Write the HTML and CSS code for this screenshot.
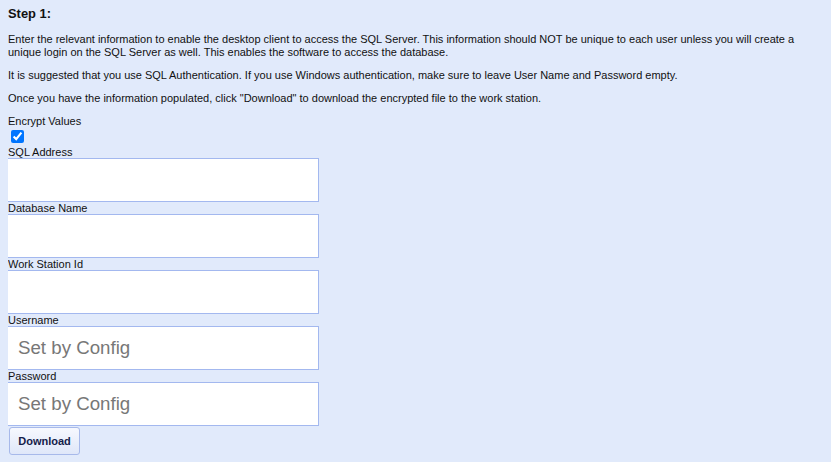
FILE: index.html
```html
<!DOCTYPE html>
<html>
<head>
<meta charset="utf-8">
<link rel="stylesheet" href="styles.css">
</head>
<body>
<h3 class="title">Step 1:</h3>
<p class="intro">Enter the relevant information to enable the desktop client to access the SQL Server. This information should NOT be unique to each user unless you will create a unique login on the SQL Server as well. This enables the software to access the database.</p>
<p class="intro">It is suggested that you use SQL Authentication. If you use Windows authentication, make sure to leave User Name and Password empty.</p>
<p class="intro">Once you have the information populated, click "Download" to download the encrypted file to the work station.</p>
<form class="form">
  <label class="lbl-top">Encrypt Values</label>
  <input class="check" type="checkbox" checked>
  <label class="lbl">SQL Address</label>
  <input class="field" type="text">
  <label class="lbl">Database Name</label>
  <input class="field" type="text">
  <label class="lbl">Work Station Id</label>
  <input class="field" type="text">
  <label class="lbl">Username</label>
  <input class="field" type="text" placeholder="Set by Config">
  <label class="lbl">Password</label>
  <input class="field" type="password" placeholder="Set by Config">
  <button class="btn" type="button">Download</button>
</form>
</body>
</html>
```
FILE: styles.css
```css
html { background: #e1eafb; }
body {
  margin: 8px;
  font-family: Arial, "Liberation Sans", sans-serif;
  font-size: 11px;
  color: #111;
  background: #e1eafb;
}
.title {
  margin: 0 0 14px 0;
  font-size: 12.9px;
  font-weight: bold;
  line-height: 11px;
}
.intro {
  margin: 10px 0;
  line-height: 13px;
}
.form { display: flex; flex-direction: column; align-items: flex-start; }
.lbl-top { display: block; line-height: 13px; }
.check {
  display: block;
  width: 13px;
  height: 13px;
  margin: 2px 0 3px 3px;
}
.lbl { display: block; line-height: 12px; }
.field {
  display: block;
  box-sizing: border-box;
  width: 312px;
  height: 44px;
  margin: 0 0 0 -1px;
  padding: 0 10px;
  border: 1px solid #a3b8ef;
  background: #fff;
  font-family: Arial, "Liberation Sans", sans-serif;
  font-size: 18.7px;
  color: #333;
  outline: none;
}
.field::placeholder { color: #777; }
.btn {
  margin: 1px 0 0 1px;
  box-sizing: border-box;
  height: 28px;
  width: 71px;
  padding: 0 8px;
  border: 1px solid #a7b9ea;
  border-radius: 3px;
  background: linear-gradient(#f6f8fe, #dfe7f9);
  font-family: Arial, "Liberation Sans", sans-serif;
  font-size: 11px;
  font-weight: bold;
  color: #14204a;
}
```
